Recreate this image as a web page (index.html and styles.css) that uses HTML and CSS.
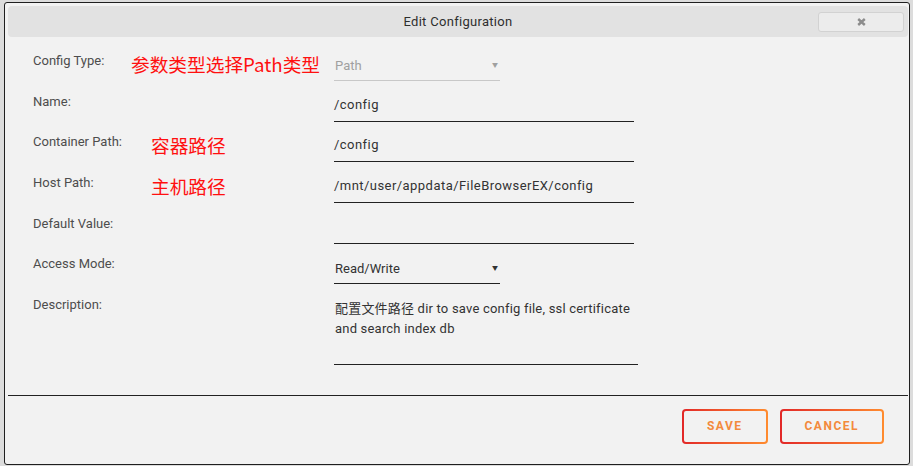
FILE: index.html
```html
<!DOCTYPE html>
<html lang="en">
<head>
<meta charset="utf-8">
<title>Edit Configuration</title>
<link rel="stylesheet" href="styles.css">
</head>
<body>
<div class="dialog">
  <div class="titlebar">
    <span class="title">Edit Configuration</span>
    <button class="close" type="button" aria-label="close">
      <svg width="9" height="8" viewBox="0 0 9 8"><path d="M1.2 1 L7.8 7 M7.8 1 L1.2 7" stroke="#8c8c8c" stroke-width="2.4" stroke-linecap="butt"/></svg>
    </button>
  </div>
  <div class="content">
    <div class="row">
      <div class="label"><span class="label-text type">Config Type:</span><span class="note">参数类型选择Path类型</span></div>
      <div class="select disabled"><span>Path</span><span class="arrow">▼</span></div>
    </div>
    <div class="row">
      <div class="label"><span class="label-text">Name:</span></div>
      <div class="input">/config</div>
    </div>
    <div class="row">
      <div class="label"><span class="label-text path">Container Path:</span><span class="note">容器路径</span></div>
      <div class="input">/config</div>
    </div>
    <div class="row">
      <div class="label"><span class="label-text path">Host Path:</span><span class="note">主机路径</span></div>
      <div class="input">/mnt/user/appdata/FileBrowserEX/config</div>
    </div>
    <div class="row">
      <div class="label"><span class="label-text">Default Value:</span></div>
      <div class="input"></div>
    </div>
    <div class="row">
      <div class="label"><span class="label-text">Access Mode:</span></div>
      <div class="select"><span>Read/Write</span><span class="arrow">▼</span></div>
    </div>
    <div class="row row-desc">
      <div class="label"><span class="label-text">Description:</span></div>
      <div class="textarea">配置文件路径 dir to save config file, ssl certificate and search index db</div>
    </div>
  </div>
  <div class="buttonpane">
    <button class="btn" type="button">SAVE</button>
    <button class="btn" type="button">CANCEL</button>
  </div>
</div>
</body>
</html>
```

FILE: styles.css
```css
* { box-sizing: border-box; }
html, body { margin: 0; height: 100%; }
body {
  background: #dcdcdc;
  font-family: Roboto, "Noto Sans CJK SC", sans-serif;
  overflow: hidden;
}
.dialog {
  margin: 2px 0 0 4px;
  width: 906px;
  height: 463px;
  border: 1px solid #1f1f1f;
  border-radius: 3px;
  background: #f2f2f2;
  padding: 3px 1px 0 3px;
  display: flex;
  flex-direction: column;
}
.titlebar {
  height: 31px;
  flex: none;
  background: #e2e2e2;
  border-radius: 4px;
  display: grid;
  grid-template-columns: 1fr auto 1fr;
  align-items: center;
}
.title {
  grid-column: 2;
  font-size: 13px;
  letter-spacing: 0.3px;
  color: #2e2e2e;
}
.close {
  grid-column: 3;
  justify-self: end;
  margin-right: 4px;
  width: 86px;
  height: 20px;
  padding: 0;
  border: 1px solid #d2d2d2;
  border-radius: 3px;
  background: #ececec;
  display: flex;
  align-items: center;
  justify-content: center;
}
.close svg { display: block; }
.content {
  padding: 13px 0 0 25px;
}
.row {
  display: grid;
  grid-template-columns: 301px auto;
  height: 40.67px;
  align-items: start;
}
.row-desc { height: 71px; }
.label {
  display: flex;
  align-items: flex-start;
  font-size: 13px;
  line-height: 21px;
  color: #4d4d4d;
}
.label-text { flex: none; }
.label-text.type { width: 98px; }
.label-text.path { width: 118px; }
.note {
  color: #ff1010;
  font-size: 18.7px;
  line-height: 20px;
  margin-top: 4px;
  font-family: "Noto Sans CJK SC", sans-serif;
}
.input {
  width: 300px;
  height: 31px;
  padding-top: 4px;
  line-height: 20px;
  font-size: 13px;
  letter-spacing: 0.45px;
  color: #333;
  border-bottom: 1px solid #222;
}
.select {
  width: 166px;
  height: 31px;
  padding: 6px 2px 0 1px;
  line-height: 20px;
  font-size: 13px;
  color: #333;
  border-bottom: 1px solid #222;
  display: flex;
  justify-content: space-between;
}
.select.disabled {
  color: #a0a0a0;
  border-bottom-color: #c8c8c8;
}
.arrow { font-size: 6px; line-height: 18px; }
.textarea {
  width: 304px;
  height: 71px;
  padding: 5px 0 0 1px;
  line-height: 20px;
  font-size: 13px;
  letter-spacing: 0.2px;
  color: #333;
  border-bottom: 1px solid #222;
}
.buttonpane {
  margin-top: 30px;
  border-top: 1.5px solid #222;
  padding: 13px 24px 0 0;
  display: flex;
  justify-content: flex-end;
  gap: 12px;
}
.btn {
  height: 35px;
  padding: 0 23px;
  border: 2px solid transparent;
  border-radius: 4px;
  background: linear-gradient(#f2f2f2, #f2f2f2) padding-box,
              linear-gradient(90deg, #e22828, #ff8c2f) border-box;
  color: #f38a3c;
  font-family: Roboto, sans-serif;
  font-weight: 700;
  font-size: 12px;
  letter-spacing: 1.5px;
}
```
